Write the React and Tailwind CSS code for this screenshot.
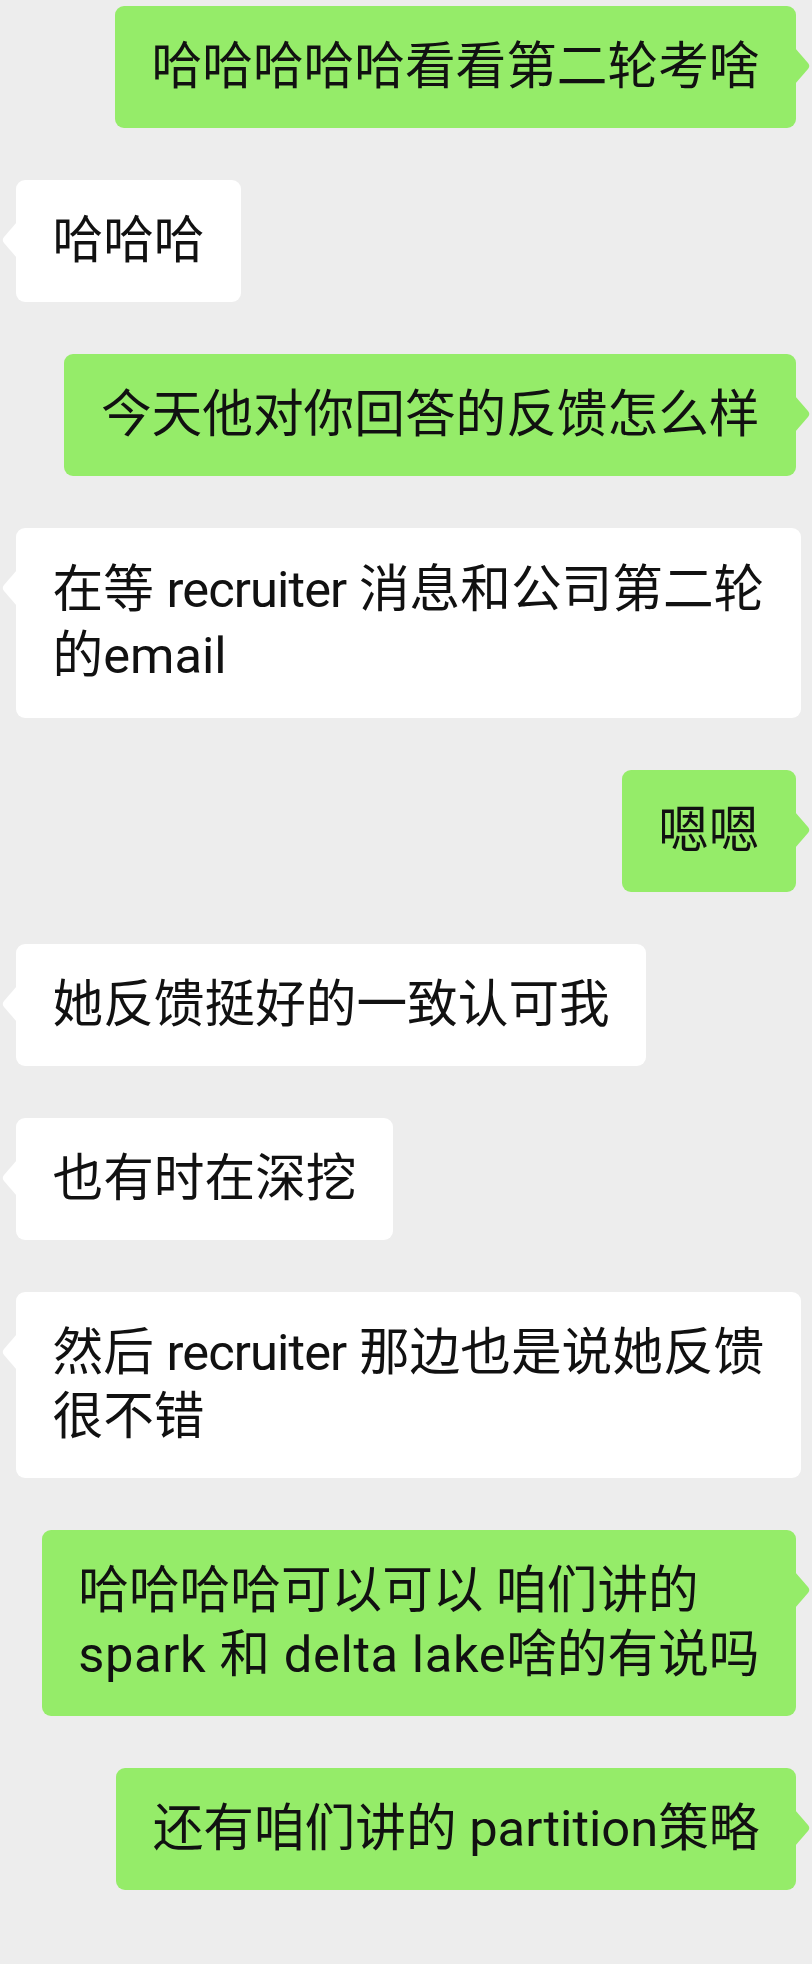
import React from 'react';

const GREEN = '#95ec69';

const Tail = ({ mine }) => (
  <svg
    width="16"
    height="36"
    viewBox="0 0 16 36"
    className={`absolute top-[42px] ${mine ? 'right-[-15px]' : 'left-[-15px] -scale-x-100'}`}
  >
    <path d="M0 0 L13 15 Q15.5 18 13 21 L0 36 Z" fill={mine ? GREEN : '#ffffff'} />
  </svg>
);

const Bubble = ({ mine, lh = 'leading-[64px]', children }) => (
  <div className={`flex ${mine ? 'justify-end' : 'justify-start'}`}>
    <div
      className={`relative rounded-[9px] px-[36.5px] py-[29px] whitespace-nowrap text-[50.67px] text-[#111111] ${lh} ${
        mine ? 'bg-[#95ec69]' : 'bg-white'
      }`}
    >
      {children}
      <Tail mine={mine} />
    </div>
  </div>
);

const Latin = ({ children }) => <span className="tracking-[-0.9px]">{children}</span>;
const Wide = ({ children }) => <span className="tracking-[0.6px]">{children}</span>;

export default function App() {
  return (
    <div className="min-h-[1964px] bg-[#ededed] px-4 pt-[6px] font-['Roboto','Noto_Sans_CJK_SC',sans-serif]">
      <div className="flex flex-col gap-[52px]">
        <Bubble mine>哈哈哈哈哈看看第二轮考啥</Bubble>
        <Bubble>哈哈哈</Bubble>
        <Bubble mine>今天他对你回答的反馈怎么样</Bubble>
        <Bubble lh="leading-[66px]">
          在等 <Latin>recruiter</Latin> 消息和公司第二轮
          <br />
          的email
        </Bubble>
        <Bubble mine>嗯嗯</Bubble>
        <Bubble>她反馈挺好的一致认可我</Bubble>
        <Bubble>也有时在深挖</Bubble>
        <Bubble>
          然后 <Latin>recruiter</Latin> 那边也是说她反馈
          <br />
          很不错
        </Bubble>
        <Bubble mine>
          哈哈哈哈可以可以 咱们讲的
          <br />
          <Wide>spark 和 delta lake</Wide>啥的有说吗
        </Bubble>
        <Bubble mine>还有咱们讲的 partition策略</Bubble>
      </div>
    </div>
  );
}
